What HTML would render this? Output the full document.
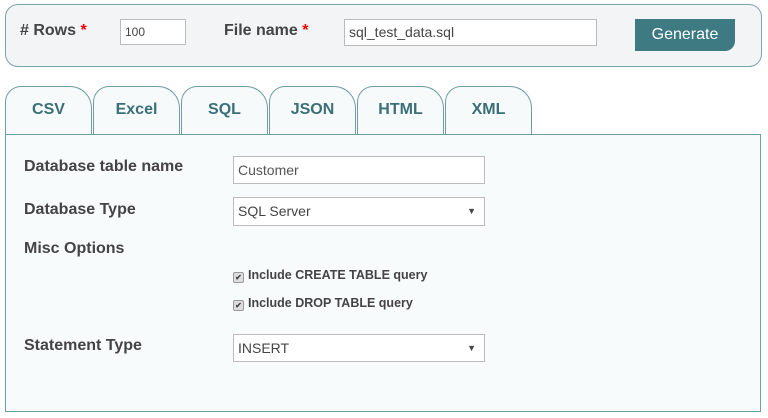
<!DOCTYPE html>
<html><head><style>
body{margin:0;width:768px;height:418px;background:#fff;font-family:"Liberation Sans",sans-serif;position:relative;overflow:hidden}
.top{position:absolute;left:5px;top:4px;width:755px;height:61px;border:1.5px solid #7ea3a8;border-radius:13px;background:#f2f4f5}
.lbl{position:absolute;font-weight:bold;color:#444;font-size:16px}
.star{color:#e00}
.inp{position:absolute;background:#fff;border:1px solid #bbb;font-size:13px;color:#444;box-sizing:border-box;padding-left:4px}
.btn{position:absolute;left:635px;top:19px;width:100px;height:32px;background:#3d7a82;color:#fff;font-size:16px;text-align:center;line-height:32px;border-radius:0 0 10px 0}
.tab{position:absolute;top:86px;width:87px;height:48px;border:1.5px solid #6e9ca2;border-bottom:none;border-radius:16px 22px 0 0;background:#f6fafb;color:#3a6f77;font-weight:bold;font-size:16px;text-align:center;line-height:46px;box-sizing:border-box}
.panel{position:absolute;left:5px;top:134px;width:756px;height:278px;border:1.5px solid #6e9ca2;background:#f7fbfc;box-sizing:border-box}
.fl{position:absolute;left:24px;font-weight:bold;color:#444;font-size:16px}
.cb{position:absolute;left:233px;font-weight:bold;color:#444;font-size:12.5px}
.cb span{display:inline-block;width:9px;height:9px;background:#ddd;border:1px solid #999;border-radius:2px;margin-right:4px;font-size:8px;line-height:9px;text-align:center;vertical-align:-1px}
.arr{position:absolute;right:8px;top:0;font-size:9px}
</style></head><body>
<div class="top"></div>
<div class="lbl" style="left:20px;top:22px"># Rows <span class="star">*</span></div>
<div class="inp" style="left:120px;top:19px;width:66px;height:26px;line-height:24px;font-size:12px">100</div>
<div class="lbl" style="left:224px;top:22px">File name <span class="star">*</span></div>
<div class="inp" style="left:344px;top:19px;width:253px;height:27px;line-height:25px;font-size:14px">sql_test_data.sql</div>
<div class="btn">Generate</div>
<div class="tab" style="left:5px">CSV</div>
<div class="tab" style="left:93px">Excel</div>
<div class="tab" style="left:181px">SQL</div>
<div class="tab" style="left:269px">JSON</div>
<div class="tab" style="left:357px">HTML</div>
<div class="tab" style="left:445px">XML</div>
<div class="panel"></div>
<div class="fl" style="top:158px">Database table name</div>
<div class="inp" style="left:233px;top:156px;width:252px;height:28px;line-height:26px;font-size:14px;color:#555">Customer</div>
<div class="fl" style="top:201px">Database Type</div>
<div class="inp" style="left:233px;top:197px;width:252px;height:29px;line-height:27px;font-size:14px;padding-left:4px">SQL Server<span class="arr">▼</span></div>
<div class="fl" style="top:240px">Misc Options</div>
<div class="cb" style="top:268px"><span>✔</span>Include CREATE TABLE query</div>
<div class="cb" style="top:296px"><span>✔</span>Include DROP TABLE query</div>
<div class="fl" style="top:337px">Statement Type</div>
<div class="inp" style="left:233px;top:334px;width:252px;height:28px;line-height:26px;font-size:14px;padding-left:4px">INSERT<span class="arr">▼</span></div>
</body></html>
